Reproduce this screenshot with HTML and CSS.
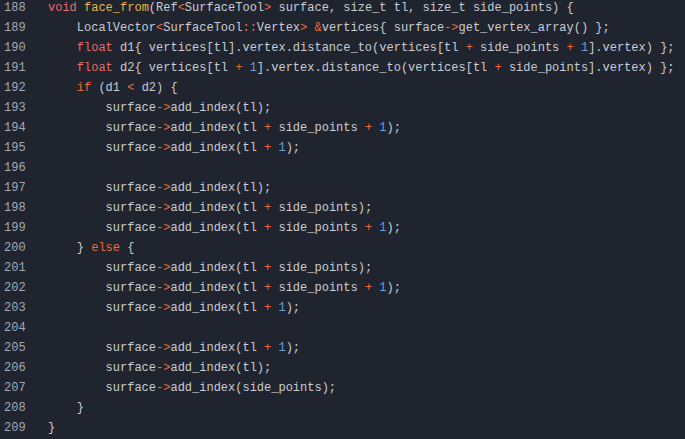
FILE: index.html
```html
<!DOCTYPE html>
<html>
<head>
<meta charset="utf-8">
<link rel="stylesheet" href="styles.css">
</head>
<body>
<div class="code">
<div class="ln"><span class="num">188</span><span class="src"><span class="t">void</span> <span class="f">face_from</span>(Ref<span class="o">&lt;</span>SurfaceTool<span class="o">&gt;</span> surface, size_t tl, size_t side_points) {</span></div>
<div class="ln"><span class="num">189</span><span class="src">    LocalVector<span class="o">&lt;</span>SurfaceTool<span class="o">::</span>Vertex<span class="o">&gt;</span> <span class="o">&amp;</span>vertices{ surface<span class="o">-&gt;</span>get_vertex_array() };</span></div>
<div class="ln"><span class="num">190</span><span class="src">    <span class="t">float</span> d1{ vertices[tl].vertex.distance_to(vertices[tl <span class="o">+</span> side_points <span class="o">+</span> <span class="n">1</span>].vertex) };</span></div>
<div class="ln"><span class="num">191</span><span class="src">    <span class="t">float</span> d2{ vertices[tl <span class="o">+</span> <span class="n">1</span>].vertex.distance_to(vertices[tl <span class="o">+</span> side_points].vertex) };</span></div>
<div class="ln"><span class="num">192</span><span class="src">    <span class="k">if</span> (d1 <span class="o">&lt;</span> d2) {</span></div>
<div class="ln"><span class="num">193</span><span class="src">        surface<span class="o">-&gt;</span>add_index(tl);</span></div>
<div class="ln"><span class="num">194</span><span class="src">        surface<span class="o">-&gt;</span>add_index(tl <span class="o">+</span> side_points <span class="o">+</span> <span class="n">1</span>);</span></div>
<div class="ln"><span class="num">195</span><span class="src">        surface<span class="o">-&gt;</span>add_index(tl <span class="o">+</span> <span class="n">1</span>);</span></div>
<div class="ln"><span class="num">196</span><span class="src"></span></div>
<div class="ln"><span class="num">197</span><span class="src">        surface<span class="o">-&gt;</span>add_index(tl);</span></div>
<div class="ln"><span class="num">198</span><span class="src">        surface<span class="o">-&gt;</span>add_index(tl <span class="o">+</span> side_points);</span></div>
<div class="ln"><span class="num">199</span><span class="src">        surface<span class="o">-&gt;</span>add_index(tl <span class="o">+</span> side_points <span class="o">+</span> <span class="n">1</span>);</span></div>
<div class="ln"><span class="num">200</span><span class="src">    } <span class="k">else</span> {</span></div>
<div class="ln"><span class="num">201</span><span class="src">        surface<span class="o">-&gt;</span>add_index(tl <span class="o">+</span> side_points);</span></div>
<div class="ln"><span class="num">202</span><span class="src">        surface<span class="o">-&gt;</span>add_index(tl <span class="o">+</span> side_points <span class="o">+</span> <span class="n">1</span>);</span></div>
<div class="ln"><span class="num">203</span><span class="src">        surface<span class="o">-&gt;</span>add_index(tl <span class="o">+</span> <span class="n">1</span>);</span></div>
<div class="ln"><span class="num">204</span><span class="src"></span></div>
<div class="ln"><span class="num">205</span><span class="src">        surface<span class="o">-&gt;</span>add_index(tl <span class="o">+</span> <span class="n">1</span>);</span></div>
<div class="ln"><span class="num">206</span><span class="src">        surface<span class="o">-&gt;</span>add_index(tl);</span></div>
<div class="ln"><span class="num">207</span><span class="src">        surface<span class="o">-&gt;</span>add_index(side_points);</span></div>
<div class="ln"><span class="num">208</span><span class="src">    }</span></div>
<div class="ln"><span class="num">209</span><span class="src">}</span></div>
</div>
</body>
</html>
```
FILE: styles.css
```css
html, body {
  margin: 0;
  padding: 0;
  background: #1f242e;
}
.code {
  margin-top: -2px;
  font-family: "Liberation Mono", monospace;
  font-size: 12px;
  line-height: 20px;
  color: #c9cdd4;
}
.ln {
  display: flex;
  height: 20px;
  white-space: pre;
}
.num {
  width: 48px;
  padding-left: 4px;
  box-sizing: border-box;
  color: #a3aab6;
  flex: none;
}
.src {
  flex: 1;
}
.t { color: #e46d6d; }
.k { color: #ec6c3c; }
.f { color: #e9b73f; }
.o { color: #ee6b3b; }
.n { color: #6b9fd6; }
```
